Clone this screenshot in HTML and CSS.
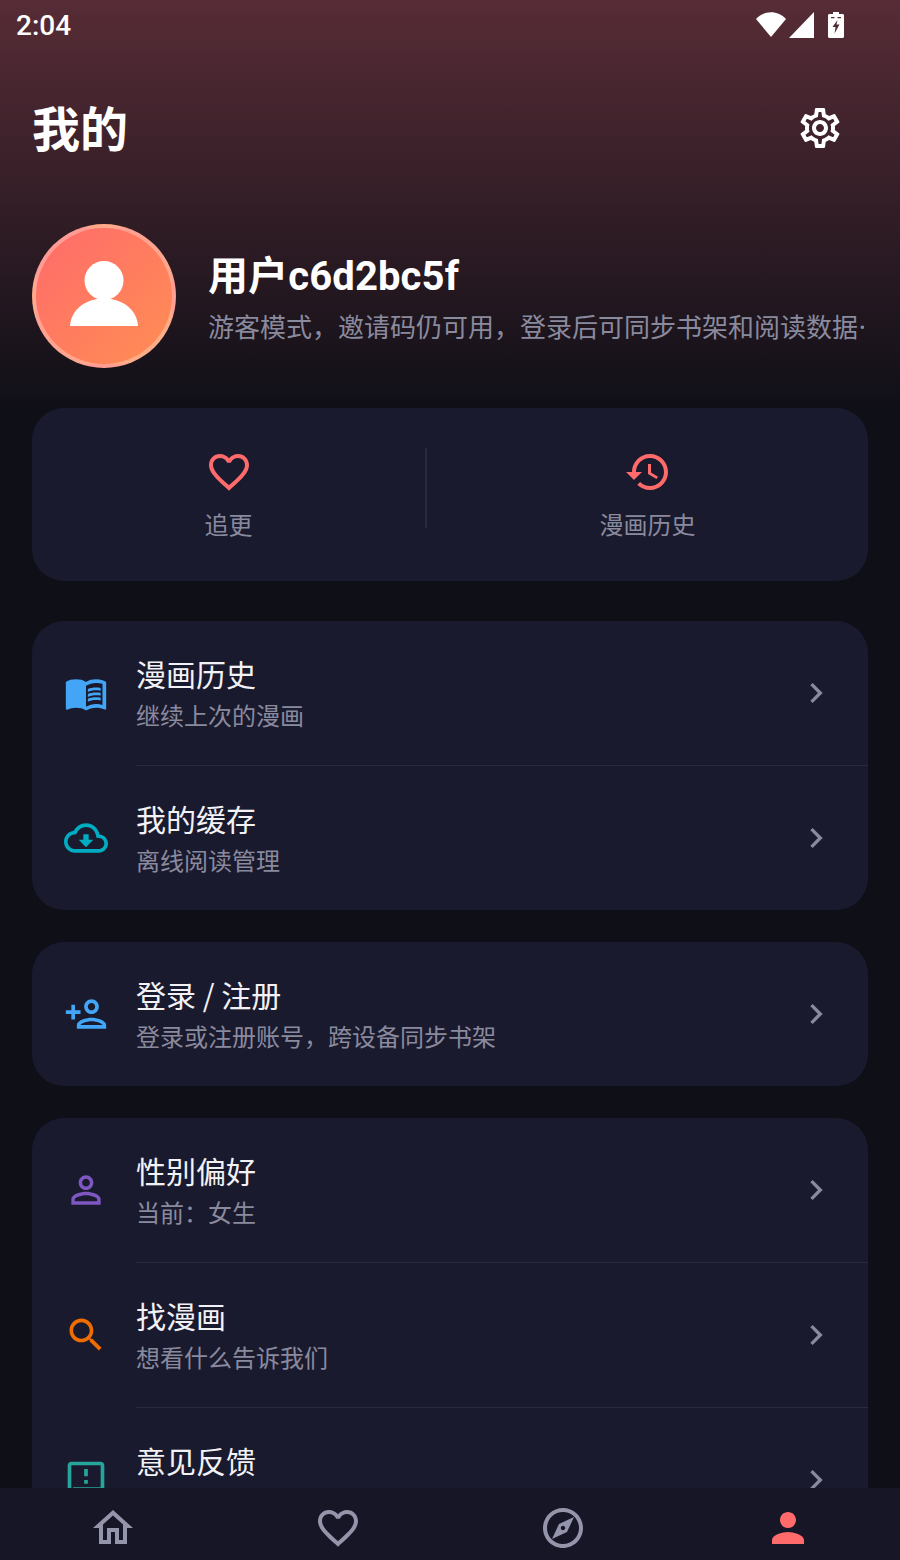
FILE: index.html
```html
<!DOCTYPE html>
<html lang="zh-CN">
<head>
    <meta charset="UTF-8">
    <meta name="viewport" content="width=device-width, initial-scale=1.0">
    <title>我的</title>
    <link rel="stylesheet" href="styles.css">
</head>
<body>
    <div class="page">
        <div class="status">
            <span class="time">2:04</span>
            <div class="status-icons">
                <svg class="ic-wifi" viewBox="0 0 30 25"><path d="M0 7C8-2 22-2 30 7L15 25Z"/></svg>
                <svg class="ic-signal" viewBox="0 0 25 26"><path d="M25 0V26H0Z"/></svg>
                <svg class="ic-battery" viewBox="0 0 16 26"><path fill-rule="evenodd" d="M5 0h6v2h3.500c.8 0 1.500.7 1.500 1.500V24.500c0 .8-.7 1.500-1.500 1.500H1.500C.7 26 0 25.300 0 24.500V3.500C0 2.700.7 2 1.500 2H5ZM3 5V6.200H6.500V5ZM9.500 5V6.200H13V5ZM9.500 8 4.500 15H7.500L6.500 21.500 11.500 12.500H8.500Z"/></svg>
            </div>
        </div>

        <div class="content">
            <div class="header">
                <h1 class="title">我的</h1>
                <svg class="ic-settings" viewBox="0 0 24 24"><path d="M19.43 12.98c.04-.32.07-.64.07-.98 0-.34-.03-.66-.07-.98l2.11-1.65c.19-.15.24-.42.12-.64l-2-3.46c-.09-.16-.26-.25-.44-.25-.06 0-.12.01-.17.03l-2.49 1c-.52-.4-1.08-.73-1.69-.98l-.38-2.65C14.46 2.18 14.25 2 14 2h-4c-.25 0-.46.18-.49.42l-.38 2.65c-.61.25-1.17.59-1.69.98l-2.49-1c-.06-.02-.12-.03-.18-.03-.17 0-.34.09-.43.25l-2 3.46c-.13.22-.07.49.12.64l2.11 1.65c-.04.32-.07.65-.07.98 0 .33.03.66.07.98l-2.11 1.65c-.19.15-.24.42-.12.64l2 3.46c.09.16.26.25.44.25.06 0 .12-.01.17-.03l2.49-1c.52.4 1.08.73 1.69.98l.38 2.65c.03.24.24.42.49.42h4c.25 0 .46-.18.49-.42l.38-2.65c.61-.25 1.17-.59 1.69-.98l2.49 1c.06.02.12.03.18.03.17 0 .34-.09.43-.25l2-3.46c.12-.22.07-.49-.12-.64l-2.11-1.65zm-1.98-1.71c.04.31.05.52.05.73 0 .21-.02.43-.05.73l-.14 1.13.89.7 1.08.84-.7 1.21-1.27-.51-1.04-.42-.9.68c-.43.32-.84.56-1.25.73l-1.06.43-.16 1.13-.2 1.35h-1.4l-.19-1.35-.16-1.13-1.06-.43c-.43-.18-.83-.41-1.23-.71l-.91-.7-1.06.43-1.27.51-.7-1.21 1.08-.84.89-.7-.14-1.13c-.03-.31-.05-.54-.05-.74s.02-.43.05-.73l.14-1.13-.89-.7-1.08-.84.7-1.21 1.27.51 1.04.42.9-.68c.43-.32.84-.56 1.25-.73l1.06-.43.16-1.13.2-1.35h1.39l.19 1.35.16 1.13 1.06.43c.43.18.83.41 1.23.71l.91.7 1.06-.43 1.27-.51.7 1.21-1.07.85-.89.7.14 1.13zM12 8c-2.21 0-4 1.79-4 4s1.79 4 4 4 4-1.79 4-4-1.79-4-4-4zm0 6c-1.1 0-2-.9-2-2s.9-2 2-2 2 .9 2 2-.9 2-2 2z"/></svg>
            </div>

            <div class="profile">
                <div class="avatar">
                    <svg viewBox="0 0 68 65"><circle cx="34" cy="19.500" r="19.500"/><path d="M0 65C1 49 15 37.500 34 37.500S67 49 68 65Z"/></svg>
                </div>
                <div class="profile-text">
                    <div class="name">用户c6d2bc5f</div>
                    <div class="desc">游客模式，邀请码仍可用，登录后可同步书架和阅读数据…</div>
                </div>
            </div>

            <div class="quick">
                <div class="quick-item">
                    <svg viewBox="0 0 24 24"><path d="M16.500 3c-1.740 0-3.410.81-4.500 2.090C10.910 3.810 9.240 3 7.500 3 4.420 3 2 5.420 2 8.500c0 3.780 3.400 6.860 8.550 11.540L12 21.350l1.450-1.320C18.600 15.360 22 12.280 22 8.500 22 5.420 19.580 3 16.500 3zm-4.400 15.550l-.1.1-.1-.1C7.140 14.240 4 11.390 4 8.500 4 6.500 5.500 5 7.500 5c1.540 0 3.040.99 3.570 2.360h1.870C13.460 5.990 14.960 5 16.500 5c2 0 3.500 1.500 3.500 3.500 0 2.890-3.140 5.740-7.900 10.050z"/></svg>
                    <span>追更</span>
                </div>
                <div class="quick-line"></div>
                <div class="quick-item">
                    <svg viewBox="0 0 24 24"><path d="M13 3c-4.970 0-9 4.030-9 9H1l3.890 3.890.07.14L9 12H6c0-3.870 3.130-7 7-7s7 3.130 7 7-3.130 7-7 7c-1.930 0-3.680-.79-4.940-2.060l-1.420 1.420C8.270 19.990 10.510 21 13 21c4.970 0 9-4.030 9-9s-4.030-9-9-9zm-1 5v5l4.280 2.540.72-1.210-3.500-2.080V8H12z"/></svg>
                    <span>漫画历史</span>
                </div>
            </div>

            <div class="card">
                <div class="row">
                    <svg class="row-icon blue" viewBox="0 0 24 24"><path d="M21 5c-1.110-.35-2.330-.5-3.500-.5-1.950 0-4.050.4-5.500 1.500-1.450-1.100-3.550-1.500-5.500-1.500S2.450 4.900 1 6v14.650c0 .25.25.5.5.5.1 0 .15-.05.25-.05C3.100 20.450 5.050 20 6.500 20c1.950 0 4.050.4 5.500 1.500 1.350-.85 3.800-1.500 5.500-1.500 1.650 0 3.350.3 4.750 1.050.1.05.15.05.25.05.25 0 .5-.25.5-.5V6c-.6-.45-1.250-.75-2-1zm0 13.500c-1.100-.35-2.300-.5-3.500-.5-1.700 0-4.150.65-5.500 1.500V8c1.350-.85 3.800-1.500 5.500-1.500 1.200 0 2.400.15 3.500.5v11.500z"/><path d="M17.500 10.500c.88 0 1.730.09 2.500.26V9.240c-.79-.15-1.640-.24-2.500-.24-1.700 0-3.240.29-4.500.83v1.660c1.130-.64 2.700-.99 4.500-.99zM13 12.490v1.660c1.130-.64 2.700-.99 4.500-.99.88 0 1.730.09 2.500.26V11.900c-.79-.15-1.640-.24-2.500-.24-1.700 0-3.240.3-4.500.83zM17.500 14.330c-1.700 0-3.240.29-4.500.83v1.660c1.130-.64 2.700-.99 4.500-.99.88 0 1.730.09 2.500.26v-1.520c-.79-.16-1.640-.24-2.500-.24z"/></svg>
                    <div class="row-text">
                        <span class="row-title">漫画历史</span>
                        <span class="row-sub">继续上次的漫画</span>
                    </div>
                    <svg class="chevron" viewBox="0 0 24 24"><path d="M10 6 8.590 7.410 13.170 12l-4.580 4.590L10 18l6-6z"/></svg>
                </div>
                <div class="row-line"></div>
                <div class="row">
                    <svg class="row-icon cyan" viewBox="0 0 24 24"><path d="M19.350 10.040C18.670 6.590 15.640 4 12 4 9.110 4 6.600 5.640 5.350 8.040 2.340 8.360 0 10.910 0 14c0 3.310 2.690 6 6 6h13c2.760 0 5-2.240 5-5 0-2.640-2.050-4.780-4.650-4.960zM19 18H6c-2.210 0-4-1.790-4-4 0-2.050 1.530-3.760 3.560-3.970l1.070-.11.5-.95C8.080 7.140 9.940 6 12 6c2.620 0 4.880 1.860 5.390 4.430l.3 1.500 1.530.11c1.560.1 2.780 1.410 2.780 2.960 0 1.650-1.350 3-3 3zm-5.550-8h-2.900v3H8l4 4 4-4h-2.550z"/></svg>
                    <div class="row-text">
                        <span class="row-title">我的缓存</span>
                        <span class="row-sub">离线阅读管理</span>
                    </div>
                    <svg class="chevron" viewBox="0 0 24 24"><path d="M10 6 8.590 7.410 13.170 12l-4.580 4.590L10 18l6-6z"/></svg>
                </div>
            </div>

            <div class="card">
                <div class="row">
                    <svg class="row-icon blue" viewBox="0 0 24 24"><path d="M15 12c2.210 0 4-1.790 4-4s-1.790-4-4-4-4 1.790-4 4 1.790 4 4 4zm0-6c1.100 0 2 .9 2 2s-.9 2-2 2-2-.9-2-2 .9-2 2-2zm0 8c-2.670 0-8 1.340-8 4v2h16v-2c0-2.660-5.330-4-8-4zm-6 4c.22-.72 3.310-2 6-2 2.700 0 5.800 1.290 6 2H9zm-3-3v-3h3v-2H6V7H4v3H1v2h3v3h2z"/></svg>
                    <div class="row-text">
                        <span class="row-title">登录 / 注册</span>
                        <span class="row-sub">登录或注册账号，跨设备同步书架</span>
                    </div>
                    <svg class="chevron" viewBox="0 0 24 24"><path d="M10 6 8.590 7.410 13.170 12l-4.580 4.590L10 18l6-6z"/></svg>
                </div>
            </div>

            <div class="card">
                <div class="row">
                    <svg class="row-icon purple" viewBox="0 0 24 24"><path d="M12 5.900c1.160 0 2.100.94 2.100 2.100s-.94 2.100-2.100 2.100S9.900 9.160 9.900 8s.94-2.100 2.100-2.100m0 9c2.970 0 6.100 1.460 6.100 2.100v1.100H5.900V17c0-.64 3.130-2.100 6.100-2.100M12 4C9.790 4 8 5.790 8 8s1.790 4 4 4 4-1.790 4-4-1.790-4-4-4zm0 9c-2.670 0-8 1.340-8 4v3h16v-3c0-2.660-5.330-4-8-4z"/></svg>
                    <div class="row-text">
                        <span class="row-title">性别偏好</span>
                        <span class="row-sub">当前：女生</span>
                    </div>
                    <svg class="chevron" viewBox="0 0 24 24"><path d="M10 6 8.590 7.410 13.170 12l-4.580 4.590L10 18l6-6z"/></svg>
                </div>
                <div class="row-line"></div>
                <div class="row">
                    <svg class="row-icon orange" viewBox="0 0 24 24"><path d="M15.500 14h-.79l-.28-.27C15.410 12.590 16 11.110 16 9.500 16 5.910 13.090 3 9.500 3S3 5.910 3 9.500 5.910 16 9.500 16c1.610 0 3.090-.59 4.230-1.570l.27.28v.79l5 4.990L20.490 19l-4.990-5zm-6 0C7.010 14 5 11.990 5 9.500S7.010 5 9.500 5 14 7.010 14 9.500 11.990 14 9.500 14z"/></svg>
                    <div class="row-text">
                        <span class="row-title">找漫画</span>
                        <span class="row-sub">想看什么告诉我们</span>
                    </div>
                    <svg class="chevron" viewBox="0 0 24 24"><path d="M10 6 8.590 7.410 13.170 12l-4.580 4.590L10 18l6-6z"/></svg>
                </div>
                <div class="row-line"></div>
                <div class="row">
                    <svg class="row-icon teal" viewBox="0 0 24 24"><path d="M20 2H4c-1.100 0-1.990.9-1.990 2L2 22l4-4h14c1.100 0 2-.9 2-2V4c0-1.100-.9-2-2-2zm0 14H5.170L4 17.170V4h16v12zm-9-4h2v2h-2zm0-6h2v4h-2z"/></svg>
                    <div class="row-text">
                        <span class="row-title">意见反馈</span>
                        <span class="row-sub">&nbsp;</span>
                    </div>
                    <svg class="chevron" viewBox="0 0 24 24"><path d="M10 6 8.590 7.410 13.170 12l-4.580 4.590L10 18l6-6z"/></svg>
                </div>
            </div>
        </div>

        <div class="nav">
            <div class="nav-item">
                <svg viewBox="0 0 24 24"><path d="M12 5.690l5 4.500V18h-2v-6H9v6H7v-7.810l5-4.500M12 3L2 12h3v8h6v-6h2v6h6v-8h3L12 3z"/></svg>
            </div>
            <div class="nav-item">
                <svg viewBox="0 0 24 24"><path d="M16.500 3c-1.740 0-3.410.81-4.500 2.090C10.910 3.810 9.240 3 7.500 3 4.420 3 2 5.420 2 8.500c0 3.780 3.400 6.860 8.550 11.540L12 21.350l1.450-1.320C18.600 15.360 22 12.280 22 8.500 22 5.420 19.580 3 16.500 3zm-4.400 15.550l-.1.1-.1-.1C7.140 14.240 4 11.390 4 8.500 4 6.500 5.500 5 7.500 5c1.540 0 3.040.99 3.570 2.360h1.870C13.460 5.990 14.960 5 16.500 5c2 0 3.500 1.500 3.500 3.500 0 2.890-3.140 5.740-7.900 10.050z"/></svg>
            </div>
            <div class="nav-item">
                <svg viewBox="0 0 24 24"><path d="M12 2C6.480 2 2 6.480 2 12s4.480 10 10 10 10-4.480 10-10S17.520 2 12 2zm0 18c-4.410 0-8-3.590-8-8s3.590-8 8-8 8 3.590 8 8-3.590 8-8 8zm-5.500-2.500l7.510-3.490L17.500 6.500 9.990 9.990 6.500 17.500zm5.500-6.600c.61 0 1.100.49 1.100 1.100s-.49 1.100-1.100 1.100-1.100-.49-1.100-1.100.49-1.100 1.100-1.100z"/></svg>
            </div>
            <div class="nav-item active">
                <svg viewBox="0 0 24 24"><path d="M12 12c2.210 0 4-1.790 4-4s-1.790-4-4-4-4 1.790-4 4 1.790 4 4 4zm0 2c-2.670 0-8 1.340-8 4v2h16v-2c0-2.660-5.330-4-8-4z"/></svg>
            </div>
        </div>
    </div>
</body>
</html>
```

FILE: styles.css
```css
*{
    padding: 0;
    margin: 0;
    box-sizing: border-box;
}
body{
    font-family: Roboto, "Noto Sans CJK SC", sans-serif;
    background: #0f0f17;
}
svg{
    display: block;
    fill: currentColor;
    flex: none;
}
.page{
    width: 900px;
    height: 1560px;
    display: flex;
    flex-direction: column;
    overflow: hidden;
    background: linear-gradient(#572c36, #0f0f17 410px) no-repeat;
}

/* status bar */
.status{
    height: 50px;
    flex: none;
    display: flex;
    align-items: center;
    justify-content: space-between;
    padding: 0 56px 0 16px;
    color: #fff;
}
.time{
    font-size: 28px;
    font-weight: 500;
}
.status-icons{
    display: flex;
    align-items: flex-start;
}
.ic-wifi{
    width: 30px;
    height: 25px;
}
.ic-signal{
    width: 25px;
    height: 26px;
    margin-left: 3px;
}
.ic-battery{
    width: 16px;
    height: 26px;
    margin-left: 14px;
}

.content{
    flex: 1;
    min-height: 0;
    overflow: hidden;
    padding: 0 32px;
}

/* header */
.header{
    height: 158px;
    display: flex;
    align-items: center;
    justify-content: space-between;
    padding-right: 24px;
    color: #fff;
}
.title{
    font-size: 48px;
    font-weight: 700;
    margin-top: -6px;
}
.ic-settings{
    width: 48px;
    height: 48px;
    margin-top: -2px;
}

/* profile */
.profile{
    margin-top: 16px;
    display: flex;
    align-items: center;
    gap: 32px;
}
.avatar{
    width: 144px;
    height: 144px;
    flex: none;
    border-radius: 50%;
    border: 4px solid rgba(255, 255, 255, .3);
    background: linear-gradient(135deg, #ff6b6b, #ff8e53);
    display: flex;
    align-items: center;
    justify-content: center;
    color: #fff;
}
.avatar svg{
    width: 68px;
    height: 65px;
    margin-top: -6px;
}
.profile-text{
    min-width: 0;
    flex: 1;
    margin-right: 4px;
    padding-top: 1px;
}
.name{
    font-size: 40px;
    font-weight: 700;
    line-height: 56px;
    letter-spacing: .12px;
    color: #fff;
}
.desc{
    margin-top: 3px;
    font-family: "Noto Sans CJK SC", sans-serif;
    font-size: 26px;
    line-height: 36px;
    color: #8a8a9e;
    white-space: nowrap;
    overflow: hidden;
}

/* quick entries */
.quick{
    margin-top: 40px;
    padding: 40px 0;
    display: flex;
    align-items: flex-start;
    background: #1a1a2e;
    border-radius: 32px;
}
.quick-item{
    flex: 1 1 auto;
    display: flex;
    flex-direction: column;
    align-items: center;
    gap: 15px;
    color: #ff6b6b;
}
.quick-item svg{
    width: 48px;
    height: 48px;
}
.quick-item span{
    font-size: 24px;
    line-height: 30px;
    color: #8a8a9e;
}
.quick-line{
    width: 2px;
    height: 80px;
    background: #2a2a3e;
}

/* menu cards */
.card{
    margin-top: 32px;
    background: #1a1a2e;
    border-radius: 32px;
    overflow: hidden;
}
.quick + .card{
    margin-top: 40px;
}
.row{
    height: 144px;
    display: flex;
    align-items: center;
    padding: 0 32px;
}
.row-line{
    height: 1px;
    margin-left: 104px;
    background: #2a2a3e;
}
.row-icon{
    width: 44px;
    height: 44px;
    margin-right: 28px;
}
.row-text{
    flex: 1;
    min-width: 0;
    display: flex;
    flex-direction: column;
    padding-top: 4px;
}
.row-title{
    font-family: "Noto Sans CJK SC", sans-serif;
    font-size: 30px;
    line-height: 34px;
    color: #f2f2f6;
}
.row-sub{
    margin-top: 10px;
    font-size: 24px;
    line-height: 34px;
    color: #8a8a9e;
}
.chevron{
    width: 40px;
    height: 40px;
    color: #8a8a9e;
}
.blue{ color: #42a5f5; }
.cyan{ color: #00acc1; }
.purple{ color: #7e57c2; }
.orange{ color: #ef6c00; }
.teal{ color: #26a69a; }

/* bottom bar */
.nav{
    height: 72px;
    flex: none;
    display: flex;
    padding-top: 8px;
    background: #161626;
}
.nav-item{
    flex: 1;
    display: flex;
    align-items: center;
    justify-content: center;
    color: #9494aa;
}
.nav-item svg{
    width: 48px;
    height: 48px;
}
.nav-item.active{
    color: #ff6b6b;
}
```
